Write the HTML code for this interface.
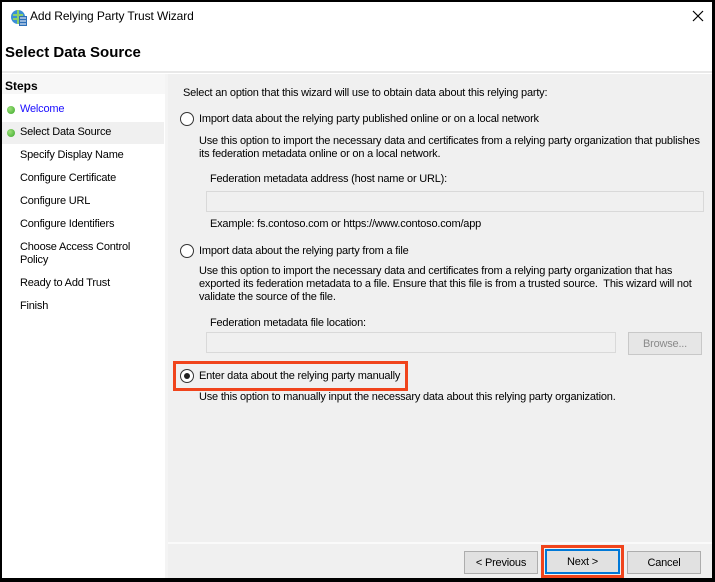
<!DOCTYPE html>
<html><head><meta charset="utf-8"><style>
body{margin:0;width:715px;height:582px;background:#000;position:relative;overflow:hidden;font-family:"Liberation Sans",sans-serif;font-size:11px;letter-spacing:-0.2px;color:#000}
.a{position:absolute;white-space:nowrap;line-height:15px}
#win{position:absolute;left:2px;top:2px;width:710px;height:576px;background:#fff}
#right{position:absolute;left:168px;top:74px;width:544px;height:504px;background:#f0f0f0;overflow:hidden}
.dot{position:absolute;width:8px;height:8px;border-radius:50%;background:radial-gradient(circle at 35% 35%,#9de07a,#3aa82a);left:5px}
.radio{position:absolute;width:12px;height:12px;border:1px solid #333;border-radius:50%;background:#fff}
.box{position:absolute;height:19px;border:1px solid #d9d9d9;background:#f0f0f0}
.btn{position:absolute;height:21px;border:1px solid #adadad;background:#e1e1e1;text-align:center;line-height:23px}
</style></head><body>
<div id="win">
<svg class="a" style="left:8px;top:7px" width="18" height="18" viewBox="0 0 18 18"><circle cx="8" cy="8" r="7" fill="#3a8fd6"/><path d="M3 6h10M3 10h10M8 1v14" stroke="#8cd06a" stroke-width="2"/><rect x="9" y="7" width="8" height="10" fill="#2c6fb8"/><path d="M10 9h6M10 12h6M10 15h6" stroke="#fff" stroke-width="1"/></svg>
<div class="a" style="left:28px;top:7px;font-size:12px;letter-spacing:-0.1px">Add Relying Party Trust Wizard</div>
<svg class="a" style="left:690px;top:8px" width="12" height="12"><path d="M1 1L11 11M11 1L1 11" stroke="#000" stroke-width="1.2"/></svg>
<div class="a" style="left:3px;top:42px;font-size:15px;line-height:18px;font-weight:bold;letter-spacing:0">Select Data Source</div>
<div class="a" style="left:0;top:69px;width:710px;height:2px;background:#e8e8e8"></div>
<div class="a" style="left:0;top:72px;width:163px;height:20px;background:#f7f7f7"></div>
<div class="a" style="left:3px;top:77px;font-weight:bold;font-size:12px;letter-spacing:0">Steps</div>
<div class="a" style="left:0;top:120px;width:162px;height:22px;background:#f0f0f0"></div>
<div class="dot" style="top:104px"></div><div class="a" style="left:18px;top:100px;color:#1a0dff">Welcome</div>
<div class="dot" style="top:127px"></div><div class="a" style="left:18px;top:123px">Select Data Source</div>
<div class="a" style="left:18px;top:146px">Specify Display Name</div>
<div class="a" style="left:18px;top:169px">Configure Certificate</div>
<div class="a" style="left:18px;top:192px">Configure URL</div>
<div class="a" style="left:18px;top:215px">Configure Identifiers</div>
<div class="a" style="left:18px;top:239px;line-height:13px">Choose Access Control<br>Policy</div>
<div class="a" style="left:18px;top:274px">Ready to Add Trust</div>
<div class="a" style="left:18px;top:297px">Finish</div>
<div class="a" style="left:163px;top:72px;width:3px;height:504px;background:#f4f4f4"></div>
</div>
<div id="right">
<div class="a" style="left:15px;top:12px">Select an option that this wizard will use to obtain data about this relying party:</div>
<div class="radio" style="left:12px;top:38px"></div>
<div class="a" style="left:31px;top:38px">Import data about the relying party published online or on a local network</div>
<div class="a" style="left:31px;top:61px;line-height:13px">Use this option to import the necessary data and certificates from a relying party organization that publishes<br>its federation metadata online or on a local network.</div>
<div class="a" style="left:42px;top:98px">Federation metadata address (host name or URL):</div>
<div class="box" style="left:38px;top:117px;width:496px"></div>
<div class="a" style="left:42px;top:143px">Example: fs.contoso.com or https://www.contoso.com/app</div>
<div class="radio" style="left:12px;top:170px"></div>
<div class="a" style="left:31px;top:170px">Import data about the relying party from a file</div>
<div class="a" style="left:31px;top:191px;line-height:13px">Use this option to import the necessary data and certificates from a relying party organization that has<br>exported its federation metadata to a file. Ensure that this file is from a trusted source.&nbsp; This wizard will not<br>validate the source of the file.</div>
<div class="a" style="left:42px;top:242px">Federation metadata file location:</div>
<div class="box" style="left:38px;top:258px;width:408px"></div>
<div class="btn" style="left:460px;top:258px;width:72px;color:#8a8a8a;background:#e6e6e6;border-color:#c8c8c8">Browse...</div>
<div class="a" style="left:5px;top:287px;width:235px;height:30px;border:3px solid #f0441c;box-sizing:border-box"></div>
<div class="radio" style="left:12px;top:295px"></div>
<div class="a" style="left:16px;top:299px;width:6px;height:6px;border-radius:50%;background:#222"></div>
<div class="a" style="left:31px;top:295px">Enter data about the relying party manually</div>
<div class="a" style="left:31px;top:316px">Use this option to manually input the necessary data about this relying party organization.</div>
<div class="a" style="left:0;top:468px;width:544px;height:2px;background:#fafafa"></div>
<div class="btn" style="left:296px;top:477px;width:72px">&lt; Previous</div>
<div class="a" style="left:373px;top:471px;width:83px;height:33px;border:3px solid #f0441c;box-sizing:border-box"></div>
<div class="btn" style="left:377px;top:475px;width:71px;height:21px;border:2px solid #0078d7">Next &gt;</div>
<div class="btn" style="left:459px;top:477px;width:72px">Cancel</div>
</div>
</body></html>
